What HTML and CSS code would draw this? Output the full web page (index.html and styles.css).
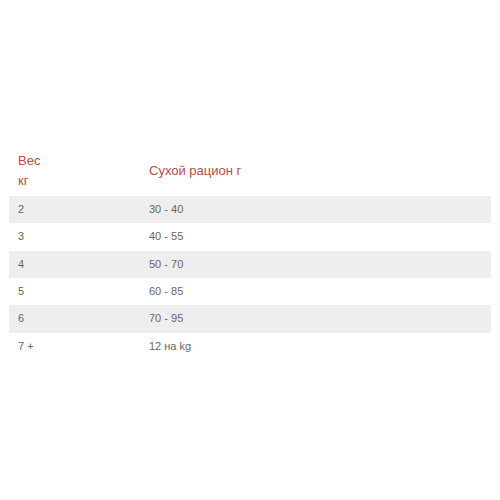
FILE: index.html
```html
<!DOCTYPE html>
<html lang="ru">
<head>
<meta charset="utf-8">
<link rel="stylesheet" href="styles.css">
</head>
<body>
<div class="wrap">
<table class="feed">
  <thead>
    <tr><th class="c1">Вес<br>кг</th><th>Сухой рацион г</th></tr>
  </thead>
  <tbody>
    <tr class="odd"><td class="c1">2</td><td>30 - 40</td></tr>
    <tr><td class="c1">3</td><td>40 - 55</td></tr>
    <tr class="odd"><td class="c1">4</td><td>50 - 70</td></tr>
    <tr><td class="c1">5</td><td>60 - 85</td></tr>
    <tr class="odd"><td class="c1">6</td><td>70 - 95</td></tr>
    <tr><td class="c1">7 +</td><td>12 на kg</td></tr>
  </tbody>
</table>
</div>
</body>
</html>
```
FILE: styles.css
```css
html, body { margin: 0; padding: 0; background: #fff; }
.wrap { padding: 146px 9px 0 9px; }
.feed {
  width: 482px;
  border-collapse: collapse;
  font-family: "Liberation Sans", Arial, sans-serif;
}
.feed th {
  text-align: left;
  font-weight: normal;
  font-size: 13px;
  line-height: 20px;
  color: #b94a48;
  padding: 5px 9px;
  vertical-align: middle;
}
.feed td {
  font-size: 11px;
  line-height: 15.33px;
  color: #666;
  padding: 6px 9px;
}
.feed .c1 { width: 113px; }
.feed tr.odd td { background: #eeeeee; }
```
